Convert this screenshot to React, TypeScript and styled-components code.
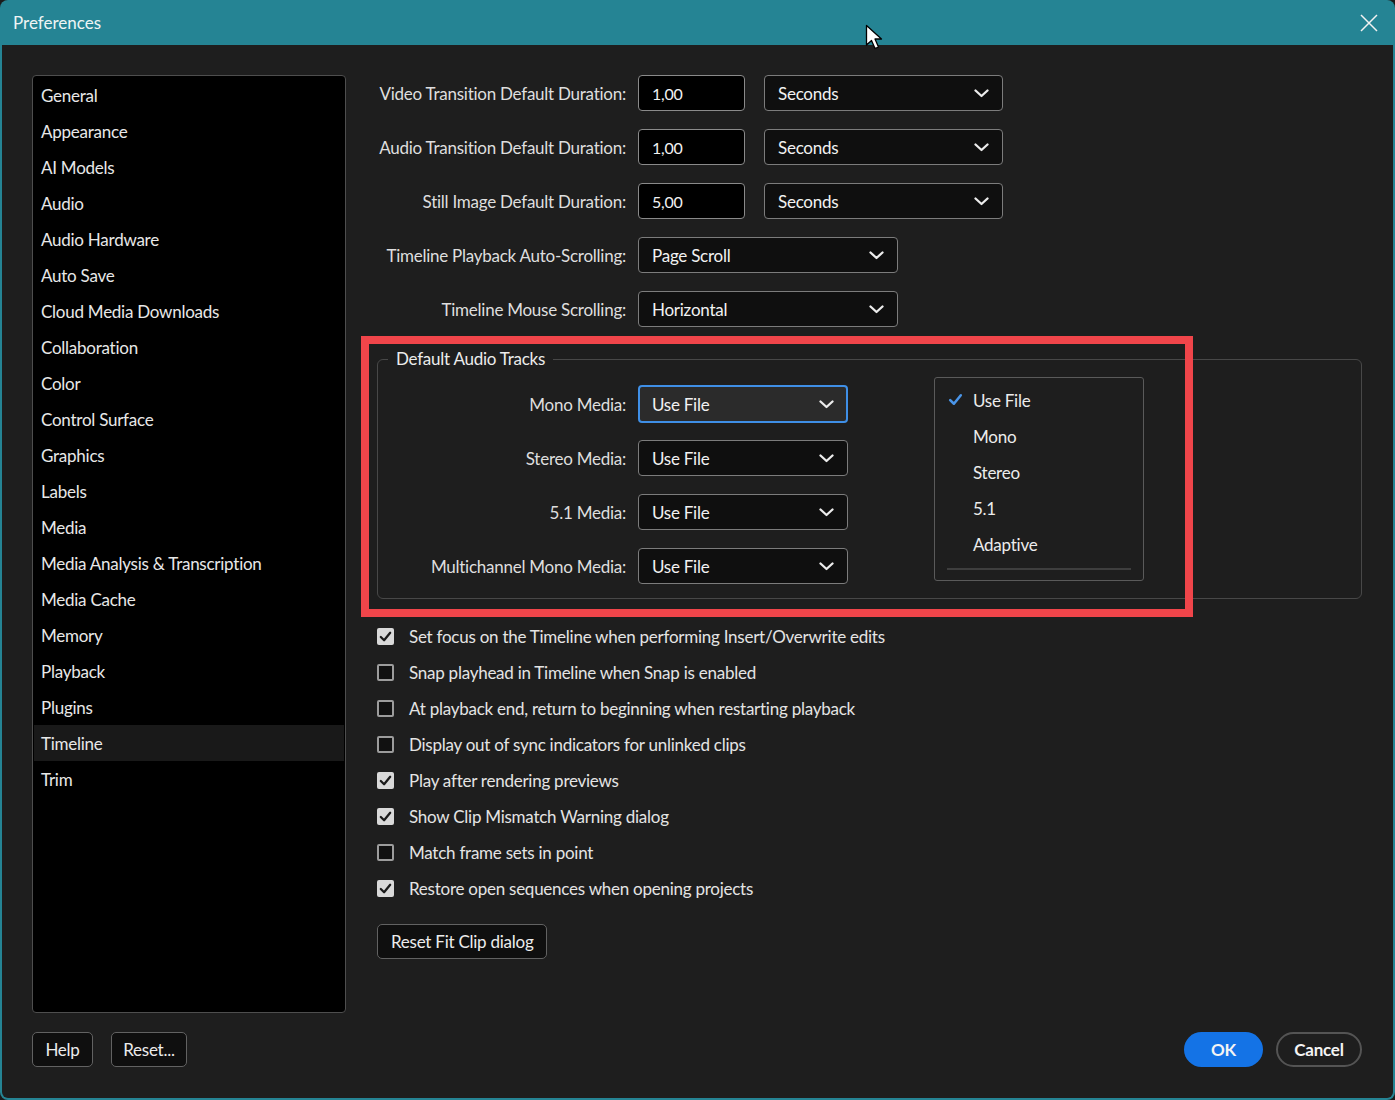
import React from 'react';
import styled, { createGlobalStyle } from 'styled-components';

const GlobalStyle = createGlobalStyle`
  html, body {
    margin: 0;
    padding: 0;
    background: #1b1b1b;
  }
  body {
    font-family: Lato, "Open Sans", "Liberation Sans", sans-serif;
    letter-spacing: -0.25px;
    -webkit-font-smoothing: antialiased;
  }
  * {
    box-sizing: border-box;
  }
`;

const Window = styled.div`
  position: relative;
  width: 1395px;
  height: 1100px;
  background: #258494;
  border-radius: 8px;
  display: flex;
  flex-direction: column;
  overflow: hidden;
`;

const TitleBar = styled.div`
  height: 45px;
  flex-shrink: 0;
  display: flex;
  align-items: center;
  justify-content: space-between;
  padding: 0 17px 0 13px;
  color: #eef4f5;
  font-size: 17px;
  letter-spacing: 0;
`;

const CloseButton = styled.div`
  width: 18px;
  height: 18px;
  display: flex;
`;

const Body = styled.div`
  flex: 1;
  margin: 0 2px 2px 2px;
  background: #1e1e1e;
  border-radius: 0 0 6px 6px;
  display: flex;
  flex-direction: column;
  min-height: 0;
`;

const Main = styled.div`
  flex: 1;
  display: flex;
  gap: 31px;
  padding: 30px 31px 0 30px;
  min-height: 0;
`;

const Sidebar = styled.div`
  width: 314px;
  flex-shrink: 0;
  background: #000;
  border: 1px solid #4e4e4e;
  border-radius: 4px;
  padding: 1px 1px;
`;

const NavItem = styled.div<{ $active?: boolean }>`
  height: 36px;
  display: flex;
  align-items: center;
  padding-left: 7px;
  font-size: 17px;
  color: #e8e8e8;
  background: ${(p) => (p.$active ? '#191919' : 'transparent')};
`;

const Content = styled.div`
  flex: 1;
  display: flex;
  flex-direction: column;
`;

const FieldGrid = styled.div<{ $labelWidth: number }>`
  display: grid;
  grid-template-columns: ${(p) => p.$labelWidth}px auto;
  column-gap: 12px;
  row-gap: 18px;
  align-items: center;
`;

const Label = styled.div`
  text-align: right;
  font-size: 17px;
  color: #dedede;
  white-space: nowrap;
`;

const Controls = styled.div`
  display: flex;
  gap: 19px;
`;

const TextInput = styled.div`
  width: 107px;
  height: 36px;
  background: #000;
  border: 1px solid #8a8a8a;
  border-radius: 4px;
  padding-left: 13px;
  display: flex;
  align-items: center;
  color: #f2f2f2;
  font-size: 16px;
`;

const SelectBox = styled.div<{ $width: number; $focused?: boolean }>`
  width: ${(p) => p.$width}px;
  height: ${(p) => (p.$focused ? 38 : 36)}px;
  margin: ${(p) => (p.$focused ? '-1px 0' : '0')};
  background: ${(p) => (p.$focused ? '#2b2b2b' : '#0f0f0f')};
  border: ${(p) => (p.$focused ? '2px solid #3f8fe6' : '1px solid #7c7c7c')};
  border-radius: 4px;
  padding: 0 ${(p) => (p.$focused ? 12 : 13)}px;
  display: flex;
  align-items: center;
  justify-content: space-between;
  color: #f2f2f2;
  font-size: 17px;
`;

const GroupBox = styled.fieldset`
  position: relative;
  margin: 22px 0 0 0;
  padding: 17px 0 14px 0;
  border: 1px solid #484848;
  border-radius: 6px;
  min-width: 0;
`;

const Legend = styled.legend`
  margin-left: 10px;
  padding: 0 8px;
  font-size: 17px;
  line-height: 20px;
  color: #ececec;
`;

const Menu = styled.div`
  position: absolute;
  left: 556px;
  top: 8px;
  width: 210px;
  height: 204px;
  background: #1e1e1e;
  border: 1px solid #5a5a5a;
  border-radius: 3px;
  padding-top: 4px;
  display: flex;
  flex-direction: column;
`;

const MenuItem = styled.div`
  position: relative;
  height: 36px;
  display: flex;
  align-items: center;
  padding-left: 38px;
  font-size: 17px;
  color: #ececec;
`;

const MenuCheck = styled.span`
  position: absolute;
  left: 12px;
  top: 9px;
  display: flex;
`;

const MenuDivider = styled.div`
  height: 2px;
  margin: 6px 12px 0 12px;
  background: #3e3e3e;
`;

const CheckList = styled.div`
  margin-top: 19px;
  display: flex;
  flex-direction: column;
`;

const CheckRow = styled.div`
  height: 36px;
  display: flex;
  align-items: center;
  gap: 15px;
  font-size: 17px;
  color: #e4e4e4;
`;

const Box = styled.span<{ $checked: boolean }>`
  width: 17px;
  height: 17px;
  border-radius: 2px;
  display: flex;
  align-items: center;
  justify-content: center;
  background: ${(p) => (p.$checked ? '#d9d9d9' : '#111')};
  border: ${(p) => (p.$checked ? 'none' : '2px solid #9c9c9c')};
`;

const PlainButton = styled.div<{ $width?: number }>`
  height: 35px;
  display: inline-flex;
  align-items: center;
  justify-content: center;
  padding: 0 13px;
  width: ${(p) => (p.$width ? `${p.$width}px` : 'auto')};
  background: #0f0f0f;
  border: 1px solid #626262;
  border-radius: 5px;
  color: #ececec;
  font-size: 17px;
`;

const ResetFitButton = styled(PlainButton)`
  margin-top: 18px;
  align-self: flex-start;
`;

const Footer = styled.div`
  display: flex;
  justify-content: space-between;
  padding: 19px 31px 31px 30px;
`;

const ButtonGroup = styled.div<{ $gap: number }>`
  display: flex;
  gap: ${(p) => p.$gap}px;
`;

const PillButton = styled.div<{ $primary?: boolean; $width: number }>`
  width: ${(p) => p.$width}px;
  height: 35px;
  border-radius: 18px;
  display: flex;
  align-items: center;
  justify-content: center;
  font-size: 17px;
  font-weight: 700;
  color: #f4f4f4;
  background: ${(p) => (p.$primary ? '#1473e6' : 'transparent')};
  border: ${(p) => (p.$primary ? 'none' : '2px solid #545454')};
`;

const Annotation = styled.div`
  position: absolute;
  left: 361px;
  top: 336px;
  width: 832px;
  height: 281px;
  border: 8px solid #f0454a;
  pointer-events: none;
`;

const Cursor = styled.svg`
  position: absolute;
  left: 865px;
  top: 24px;
`;

const Chevron = () => (
  <svg width="15" height="9" viewBox="0 0 15 9">
    <path d="M1.5 1.5 L7.5 7 L13.5 1.5" fill="none" stroke="#ececec" strokeWidth="2.3" strokeLinecap="round" strokeLinejoin="round" />
  </svg>
);

const Tick = ({ color, size }: { color: string; size: number }) => (
  <svg width={size} height={size} viewBox="0 0 16 16">
    <path d="M3 8.5 L6.5 12 L13 4" fill="none" stroke={color} strokeWidth="2.4" strokeLinecap="round" strokeLinejoin="round" />
  </svg>
);

const navItems = [
  'General',
  'Appearance',
  'AI Models',
  'Audio',
  'Audio Hardware',
  'Auto Save',
  'Cloud Media Downloads',
  'Collaboration',
  'Color',
  'Control Surface',
  'Graphics',
  'Labels',
  'Media',
  'Media Analysis & Transcription',
  'Media Cache',
  'Memory',
  'Playback',
  'Plugins',
  'Timeline',
  'Trim',
];

const durations = [
  { label: 'Video Transition Default Duration:', value: '1,00' },
  { label: 'Audio Transition Default Duration:', value: '1,00' },
  { label: 'Still Image Default Duration:', value: '5,00' },
];

const scrolling = [
  { label: 'Timeline Playback Auto-Scrolling:', value: 'Page Scroll' },
  { label: 'Timeline Mouse Scrolling:', value: 'Horizontal' },
];

const audioTracks = ['Mono Media:', 'Stereo Media:', '5.1 Media:', 'Multichannel Mono Media:'];

const menuOptions = ['Use File', 'Mono', 'Stereo', '5.1', 'Adaptive'];

const options = [
  { text: 'Set focus on the Timeline when performing Insert/Overwrite edits', checked: true },
  { text: 'Snap playhead in Timeline when Snap is enabled', checked: false },
  { text: 'At playback end, return to beginning when restarting playback', checked: false },
  { text: 'Display out of sync indicators for unlinked clips', checked: false },
  { text: 'Play after rendering previews', checked: true },
  { text: 'Show Clip Mismatch Warning dialog', checked: true },
  { text: 'Match frame sets in point', checked: false },
  { text: 'Restore open sequences when opening projects', checked: true },
];

const App = () => {
  return (
    <>
      <GlobalStyle />
      <Window>
        <TitleBar>
          <span>Preferences</span>
          <CloseButton>
            <svg width="18" height="18" viewBox="0 0 18 18">
              <path d="M1 1 L17 17 M17 1 L1 17" stroke="#f2f2f2" strokeWidth="1.5" />
            </svg>
          </CloseButton>
        </TitleBar>
        <Body>
          <Main>
            <Sidebar>
              {navItems.map((item) => (
                <NavItem key={item} $active={item === 'Timeline'}>
                  {item}
                </NavItem>
              ))}
            </Sidebar>
            <Content>
              <FieldGrid $labelWidth={249}>
                {durations.map((row) => (
                  <React.Fragment key={row.label}>
                    <Label>{row.label}</Label>
                    <Controls>
                      <TextInput>{row.value}</TextInput>
                      <SelectBox $width={239}>
                        <span>Seconds</span>
                        <Chevron />
                      </SelectBox>
                    </Controls>
                  </React.Fragment>
                ))}
                {scrolling.map((row) => (
                  <React.Fragment key={row.label}>
                    <Label>{row.label}</Label>
                    <Controls>
                      <SelectBox $width={260}>
                        <span>{row.value}</span>
                        <Chevron />
                      </SelectBox>
                    </Controls>
                  </React.Fragment>
                ))}
              </FieldGrid>

              <GroupBox>
                <Legend>Default Audio Tracks</Legend>
                <FieldGrid $labelWidth={248}>
                  {audioTracks.map((label, i) => (
                    <React.Fragment key={label}>
                      <Label>{label}</Label>
                      <Controls>
                        <SelectBox $width={210} $focused={i === 0}>
                          <span>Use File</span>
                          <Chevron />
                        </SelectBox>
                      </Controls>
                    </React.Fragment>
                  ))}
                </FieldGrid>
                <Menu>
                  {menuOptions.map((opt, i) => (
                    <MenuItem key={opt}>
                      {i === 0 && (
                        <MenuCheck>
                          <Tick color="#4a95e8" size={17} />
                        </MenuCheck>
                      )}
                      {opt}
                    </MenuItem>
                  ))}
                  <MenuDivider />
                </Menu>
              </GroupBox>

              <CheckList>
                {options.map((opt) => (
                  <CheckRow key={opt.text}>
                    <Box $checked={opt.checked}>{opt.checked && <Tick color="#1a1a1a" size={15} />}</Box>
                    <span>{opt.text}</span>
                  </CheckRow>
                ))}
              </CheckList>

              <ResetFitButton>Reset Fit Clip dialog</ResetFitButton>
            </Content>
          </Main>
          <Footer>
            <ButtonGroup $gap={18}>
              <PlainButton $width={61}>Help</PlainButton>
              <PlainButton $width={76}>Reset...</PlainButton>
            </ButtonGroup>
            <ButtonGroup $gap={13}>
              <PillButton $primary $width={79}>
                OK
              </PillButton>
              <PillButton $width={86}>Cancel</PillButton>
            </ButtonGroup>
          </Footer>
        </Body>
        <Annotation />
        <Cursor width="20" height="28" viewBox="0 0 20 28">
          <path d="M1.5 1.5 L1.5 21 L6.5 16.5 L10 24.5 L13.5 23 L10 15 L16.5 15 Z" fill="#fff" stroke="#000" strokeWidth="1.3" strokeLinejoin="round" />
        </Cursor>
      </Window>
    </>
  );
};

export default App;
